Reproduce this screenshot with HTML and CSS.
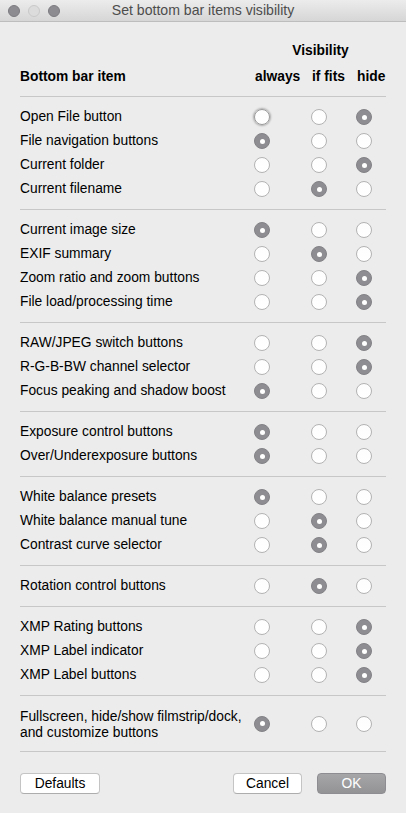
FILE: index.html
```html
<!DOCTYPE html>
<html>
<head>
<meta charset="utf-8">
<link rel="stylesheet" href="styles.css">
</head>
<body>
<div class="window">
  <div class="titlebar">
    <div class="lights">
      <span class="light dark"></span>
      <span class="light pale"></span>
      <span class="light dark"></span>
    </div>
    <div class="title">Set bottom bar items visibility</div>
  </div>
  <div class="content">
    <div class="head">
      <div class="vis">Visibility</div>
      <div class="hcol">Bottom bar item</div>
      <div class="hopt">always</div>
      <div class="hopt">if fits</div>
      <div class="hopt">hide</div>
    </div>

    <div class="section">
      <div class="row"><span class="label">Open File button</span><span class="radio focus"></span><span class="radio"></span><span class="radio on"></span></div>
      <div class="row"><span class="label">File navigation buttons</span><span class="radio on"></span><span class="radio"></span><span class="radio"></span></div>
      <div class="row"><span class="label">Current folder</span><span class="radio"></span><span class="radio"></span><span class="radio on"></span></div>
      <div class="row"><span class="label">Current filename</span><span class="radio"></span><span class="radio on"></span><span class="radio"></span></div>
    </div>

    <div class="section">
      <div class="row"><span class="label">Current image size</span><span class="radio on"></span><span class="radio"></span><span class="radio"></span></div>
      <div class="row"><span class="label">EXIF summary</span><span class="radio"></span><span class="radio on"></span><span class="radio"></span></div>
      <div class="row"><span class="label">Zoom ratio and zoom buttons</span><span class="radio"></span><span class="radio"></span><span class="radio on"></span></div>
      <div class="row"><span class="label">File load/processing time</span><span class="radio"></span><span class="radio"></span><span class="radio on"></span></div>
    </div>

    <div class="section">
      <div class="row"><span class="label">RAW/JPEG switch buttons</span><span class="radio"></span><span class="radio"></span><span class="radio on"></span></div>
      <div class="row"><span class="label">R-G-B-BW channel selector</span><span class="radio"></span><span class="radio"></span><span class="radio on"></span></div>
      <div class="row"><span class="label">Focus peaking and shadow boost</span><span class="radio on"></span><span class="radio"></span><span class="radio"></span></div>
    </div>

    <div class="section">
      <div class="row"><span class="label">Exposure control buttons</span><span class="radio on"></span><span class="radio"></span><span class="radio"></span></div>
      <div class="row"><span class="label">Over/Underexposure buttons</span><span class="radio on"></span><span class="radio"></span><span class="radio"></span></div>
    </div>

    <div class="section">
      <div class="row"><span class="label">White balance presets</span><span class="radio on"></span><span class="radio"></span><span class="radio"></span></div>
      <div class="row"><span class="label">White balance manual tune</span><span class="radio"></span><span class="radio on"></span><span class="radio"></span></div>
      <div class="row"><span class="label">Contrast curve selector</span><span class="radio"></span><span class="radio on"></span><span class="radio"></span></div>
    </div>

    <div class="section">
      <div class="row"><span class="label">Rotation control buttons</span><span class="radio"></span><span class="radio on"></span><span class="radio"></span></div>
    </div>

    <div class="section">
      <div class="row"><span class="label">XMP Rating buttons</span><span class="radio"></span><span class="radio"></span><span class="radio on"></span></div>
      <div class="row"><span class="label">XMP Label indicator</span><span class="radio"></span><span class="radio"></span><span class="radio on"></span></div>
      <div class="row"><span class="label">XMP Label buttons</span><span class="radio"></span><span class="radio"></span><span class="radio on"></span></div>
    </div>

    <div class="section last">
      <div class="row tall"><span class="label two">Fullscreen, hide/show filmstrip/dock,<br>and customize buttons</span><span class="radio on"></span><span class="radio"></span><span class="radio"></span></div>
    </div>

    <div class="buttons">
      <button class="btn defaults">Defaults</button>
      <div class="spacer"></div>
      <button class="btn cancel">Cancel</button>
      <button class="btn ok">OK</button>
    </div>
  </div>
</div>
</body>
</html>
```

FILE: styles.css
```css
html, body {
  margin: 0;
  padding: 0;
}
body {
  background: #ececec;
  font-family: "Liberation Sans", Arial, sans-serif;
  font-size: 13.8px;
  color: #000;
}
.window {
  width: 406px;
  height: 813px;
  background: #ececec;
  overflow: hidden;
}
.titlebar {
  height: 21px;
  border-bottom: 1px solid #bdbdbd;
  background: linear-gradient(#ececec, #d6d6d6);
  display: flex;
  align-items: center;
  position: relative;
}
.lights {
  display: flex;
  gap: 8px;
  padding-left: 8px;
}
.light {
  width: 12px;
  height: 12px;
  border-radius: 50%;
  box-sizing: border-box;
}
.light.dark {
  background: #8d8c90;
  border: 1px solid #7c7b80;
}
.light.pale {
  background: #dcdcdc;
  border: 1px solid #c9c9c9;
}
.title {
  position: absolute;
  left: 0;
  right: 0;
  top: 0;
  line-height: 21px;
  text-align: center;
  color: #4d4d4d;
  font-size: 14.1px;
}
.content {
  padding: 0 20px;
}
.head {
  display: grid;
  grid-template-columns: 1fr 57px 45px 29px;
  padding-top: 21px;
  padding-bottom: 11px;
  border-bottom: 1px solid #c7c7c7;
  font-weight: bold;
  font-size: 13.8px;
  line-height: 16px;
  row-gap: 10px;
}
.vis {
  grid-column: 2 / 5;
  text-align: center;
}
.hcol {
  grid-column: 1;
}
.hopt {
  white-space: nowrap;
}
.section {
  padding: 8px 0 8px;
  border-bottom: 1px solid #c7c7c7;
}
.row {
  display: grid;
  grid-template-columns: 1fr 57px 45px 29px;
  align-items: center;
  height: 24px;
}
.row.tall {
  height: auto;
}
.label {
  line-height: 24px;
  white-space: nowrap;
}
.label.two {
  line-height: 16px;
  padding: 5px 0 2px;
}
.radio {
  width: 16px;
  height: 16px;
  box-sizing: border-box;
  border-radius: 50%;
  border: 1px solid #b3b3b3;
  background: linear-gradient(#fdfdfd, #ffffff);
  margin-left: -1px;
  position: relative;
}
.radio.on {
  background: #8e8e92;
  border-color: #838387;
}
.radio.on::after {
  content: "";
  position: absolute;
  left: 4.5px;
  top: 4.5px;
  width: 5px;
  height: 5px;
  border-radius: 50%;
  background: #fff;
}
.radio.focus {
  border-color: #9a9a9a;
  box-shadow: 0 0 2px 1px rgba(0, 0, 0, 0.28);
}
.buttons {
  display: flex;
  align-items: center;
  gap: 15px;
  padding-top: 21px;
}
.spacer {
  flex: 1;
}
.btn {
  font-family: "Liberation Sans", Arial, sans-serif;
  font-size: 13.8px;
  height: 21px;
  padding: 0;
  border-radius: 4px;
  border: 1px solid #c4c4c4;
  border-bottom-color: #adadad;
  background: #fff;
  color: #000;
  line-height: 19px;
}
.defaults {
  width: 80px;
}
.cancel {
  width: 69px;
}
.ok {
  width: 69px;
  background: linear-gradient(#a6a6a9, #939396);
  border-color: #8e8e92;
  color: #fff;
  margin-left: 0;
}
```
